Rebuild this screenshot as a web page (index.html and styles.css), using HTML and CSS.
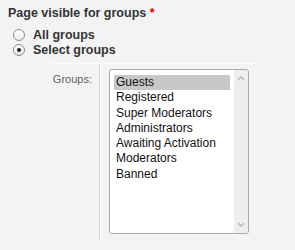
FILE: index.html
```html
<!DOCTYPE html>
<html lang="en">
<head>
  <meta charset="UTF-8">
  <title>Page visibility</title>
  <link rel="stylesheet" href="styles.css">
</head>
<body>
  <div class="field">
    <div class="field-title">Page visible for groups <span class="req">*</span></div>
    <div class="radios">
      <label class="radio"><span class="radio-dot"></span>All groups</label>
      <label class="radio"><span class="radio-dot checked"></span>Select groups</label>
    </div>
    <div class="group-row">
      <div class="group-label">Groups:</div>
      <div class="group-input">
        <div class="listbox">
          <ul class="options">
            <li class="selected">Guests</li>
            <li>Registered</li>
            <li>Super Moderators</li>
            <li>Administrators</li>
            <li>Awaiting Activation</li>
            <li>Moderators</li>
            <li>Banned</li>
          </ul>
          <div class="scrollbar">
            <svg width="14" height="10" viewBox="0 0 14 10"><path d="M4 7 L7 4 L10 7" fill="none" stroke="#bdbdbd" stroke-width="1.6"/></svg>
            <svg width="14" height="10" viewBox="0 0 14 10"><path d="M4 3 L7 6 L10 3" fill="none" stroke="#bdbdbd" stroke-width="1.6"/></svg>
          </div>
        </div>
      </div>
    </div>
  </div>
</body>
</html>
```

FILE: styles.css
```css
html, body {
  margin: 0;
  padding: 0;
}
body {
  background: #f3f3f3;
  font-family: 'Liberation Sans', Arial, sans-serif;
  color: #333;
  width: 295px;
  height: 250px;
  overflow: hidden;
}
.field {
  padding: 5px 0 0 8px;
}
.field-title {
  font-size: 12.5px;
  font-weight: 700;
  line-height: 16px;
  color: #333;
  margin-bottom: 6px;
}
.req {
  color: #d00;
}
.radios {
  display: flex;
  flex-direction: column;
  margin-left: 5px;
}
.radio {
  display: flex;
  align-items: center;
  gap: 8px;
  height: 15px;
  font-size: 12.5px;
  font-weight: 700;
  color: #333;
}
.radio-dot {
  width: 10px;
  height: 10px;
  border: 1px solid #8c8c8c;
  border-radius: 50%;
  background: linear-gradient(#fff, #ececec);
  display: flex;
  align-items: center;
  justify-content: center;
}
.radio-dot.checked::after {
  content: '';
  width: 4px;
  height: 4px;
  border-radius: 50%;
  background: #222;
}
.group-row {
  display: flex;
  margin: 6px 0 0 42px;
  width: 205px;
  border-top: 1px solid #fbfbfb;
}
.group-label {
  width: 42px;
  padding: 9px 7px 0 0;
  text-align: right;
  font-size: 11px;
  line-height: 13px;
  color: #5f5f5f;
  border-right: 1px solid #d9d9d9;
  box-shadow: 1px 0 0 #fff;
}
.group-input {
  padding: 5px 0 6px 9px;
}
.listbox {
  width: 138px;
  height: 163px;
  border: 1px solid #a9a9a9;
  border-radius: 3px;
  background: #fff;
  display: flex;
  overflow: hidden;
}
.options {
  list-style: none;
  margin: 0;
  padding: 5px 4px;
  flex: 1;
  font-size: 12px;
  line-height: 15.3px;
  color: #111;
}
.options li {
  padding-left: 2px;
  white-space: nowrap;
}
.options li.selected {
  background: #c8c8c8;
}
.scrollbar {
  width: 14px;
  background: #eeeeee;
  display: flex;
  flex-direction: column;
  justify-content: space-between;
  padding: 3px 0;
}
.scrollbar svg {
  display: block;
}
```
